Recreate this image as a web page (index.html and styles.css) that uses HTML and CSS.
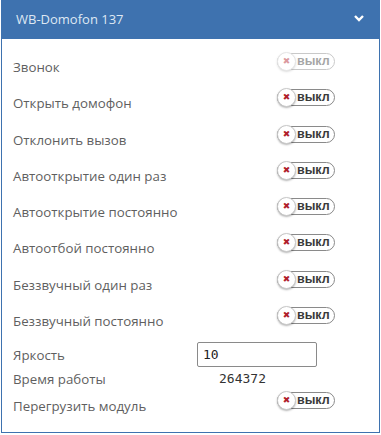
FILE: index.html
```html
<!DOCTYPE html>
<html lang="ru">

<head>
    <meta charset="UTF-8">
    <title>WB-Domofon 137</title>
    <link rel="stylesheet" href="styles.css">
</head>

<body>
    <div class="panel">
        <!-- заголовок -->
        <div class="panel-heading">
            <span class="panel-title">WB-Domofon 137</span>
            <svg class="chevron" viewBox="0 0 10 8">
                <path d="M1 2l4 4 4-4" fill="none" stroke="#fff" stroke-width="2.4"></path>
            </svg>
        </div>

        <div class="panel-body">
            <div class="row">
                <div class="label">Звонок</div>
                <div class="switch disabled"><span class="knob">✖</span><span class="state">выкл</span></div>
            </div>
            <div class="row">
                <div class="label">Открыть домофон</div>
                <div class="switch"><span class="knob">✖</span><span class="state">выкл</span></div>
            </div>
            <div class="row">
                <div class="label">Отклонить вызов</div>
                <div class="switch"><span class="knob">✖</span><span class="state">выкл</span></div>
            </div>
            <div class="row">
                <div class="label">Автооткрытие один раз</div>
                <div class="switch"><span class="knob">✖</span><span class="state">выкл</span></div>
            </div>
            <div class="row">
                <div class="label">Автооткрытие постоянно</div>
                <div class="switch"><span class="knob">✖</span><span class="state">выкл</span></div>
            </div>
            <div class="row">
                <div class="label">Автоотбой постоянно</div>
                <div class="switch"><span class="knob">✖</span><span class="state">выкл</span></div>
            </div>
            <div class="row">
                <div class="label">Беззвучный один раз</div>
                <div class="switch"><span class="knob">✖</span><span class="state">выкл</span></div>
            </div>
            <div class="row">
                <div class="label">Беззвучный постоянно</div>
                <div class="switch"><span class="knob">✖</span><span class="state">выкл</span></div>
            </div>

            <div class="row-value brightness">
                <div class="label-short">Яркость</div>
                <input class="value-input" type="text" value="10">
            </div>
            <div class="row-value uptime">
                <div class="label-short">Время работы</div>
                <div class="value-text">264372</div>
            </div>
            <div class="row reboot">
                <div class="label">Перегрузить модуль</div>
                <div class="switch"><span class="knob">✖</span><span class="state">выкл</span></div>
            </div>
        </div>
    </div>
</body>

</html>
```

FILE: styles.css
```css
body {
    margin: 0;
    font-family: "Open Sans", Arial, sans-serif;
    background: #fff;
}

/* панель */
.panel {
    box-sizing: border-box;
    width: 379px;
    height: 433px;
    margin-left: 1px;
    border: 1px solid #3e72af;
    border-top: none;
}

.panel-heading {
    height: 39px;
    margin: 0 -1px;
    background: #3e72af;
    display: flex;
    align-items: center;
    justify-content: space-between;
    padding: 0 16px 0 15px;
}

.panel-title {
    color: #dfe8f3;
    font-size: 13px;
    margin-top: -2px;
}

.chevron {
    width: 10px;
    height: 8px;
    margin-top: -3px;
}

.panel-body {
    padding: 14px 0 0 11px;
}

/* строки с переключателями */
.row {
    display: flex;
    height: 36.3px;
}

.label {
    width: 264px;
    padding-top: 4px;
    font-size: 13.3px;
    line-height: 20px;
    color: #5f5f5f;
}

.switch {
    position: relative;
    box-sizing: border-box;
    width: 58px;
    height: 17px;
    border: 1px solid #8a8a8a;
    border-radius: 9px;
    display: flex;
    align-items: center;
}

.switch.disabled {
    opacity: 0.45;
}

.knob {
    box-sizing: border-box;
    width: 19px;
    height: 19px;
    margin-left: -1px;
    border-radius: 50%;
    background: #fff;
    border: 1px solid #c8c8c8;
    box-shadow: 0 1px 2px rgba(0, 0, 0, 0.3);
    color: #b0202a;
    font-family: "DejaVu Sans", sans-serif;
    font-size: 9px;
    line-height: 17px;
    text-align: center;
}

.state {
    margin-left: 1px;
    font-family: "Liberation Sans", Arial, sans-serif;
    font-size: 12.5px;
    font-weight: bold;
    color: #3a3a3a;
    line-height: 15px;
}

/* поля значений */
.row-value {
    display: flex;
    align-items: center;
}

.label-short {
    width: 184px;
    font-size: 13.3px;
    line-height: 20px;
    color: #5f5f5f;
}

.brightness {
    margin-top: -1px;
    height: 25px;
}

.value-input {
    box-sizing: border-box;
    width: 120px;
    height: 25px;
    border: 1px solid #8a8a8a;
    border-radius: 2px;
    padding: 0 5px;
    font-family: "DejaVu Sans Mono", monospace;
    font-size: 13px;
    color: #222;
}

.uptime {
    height: 23px;
}

.value-text {
    padding-left: 22px;
    font-family: "DejaVu Sans Mono", monospace;
    font-size: 13px;
    color: #333;
}

.reboot {
    margin-top: 2px;
}
```
